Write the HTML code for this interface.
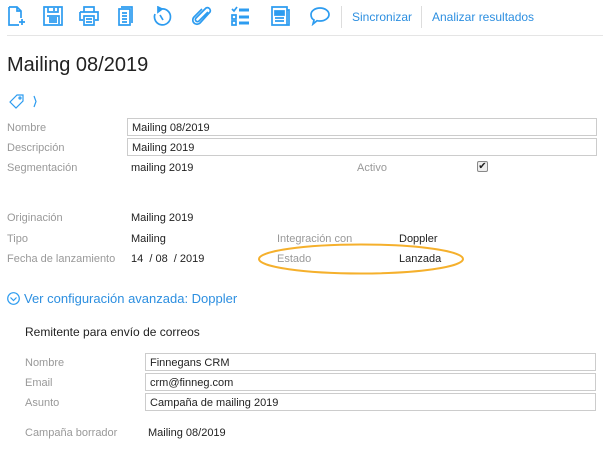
<!DOCTYPE html>
<html><head><meta charset="utf-8"><style>
body{margin:0;width:603px;height:456px;background:#fff;font-family:"Liberation Sans",sans-serif;position:relative;overflow:hidden}
.a{position:absolute;white-space:nowrap}
.l{font-size:11px;color:#999}
.v{font-size:11px;color:#222}
.in{position:absolute;border:1px solid #ccc;box-sizing:border-box;font-size:11px;color:#222;padding:3px 0 0 4px;height:18px}
svg.i{position:absolute;top:6px;width:20px;height:20px;fill:none;stroke:#2d9cf0;stroke-width:1.7}
</style></head><body>
<svg class="i" style="left:7px" viewBox="0 0 20 20"><path d="M2 1h8l4 4v7M2 1v18h10M10 1v4h4M15 13v6M12 16h6"/></svg>
<svg class="i" style="left:43px" viewBox="0 0 20 20"><path d="M1 1h18v18H1zM5 1v5h10V1M11 2v3M4 10h12v8M6 12h8M6 14h8M6 16h8"/></svg>
<svg class="i" style="left:79px" viewBox="0 0 20 20"><path d="M5 6V1h10v5M1 6h18v8h-3M4 14H1V6M5 10h10v9H5zM7 13h6M7 16h6"/></svg>
<svg class="i" style="left:115px" viewBox="0 0 20 20"><path d="M4 3h11v16H4zM6 1h11v16M7 7h5M7 10h5M7 13h5M7 16h5"/></svg>
<svg class="i" style="left:152px" viewBox="0 0 20 20"><path d="M9 3a8 8 0 1 1-6 5M8 9l3 5"/><path d="M6 1l4 2-4 3z" fill="#2d9cf0"/></svg>
<svg class="i" style="left:192px" viewBox="0 0 20 20"><path d="M16 6l-9 9a2 2 0 0 1-3-3l10-10a3 3 0 0 1 4 4L8 17a4 4 0 0 1-6-6l8-8"/></svg>
<svg class="i" style="left:231px" viewBox="0 0 20 20"><path d="M1 3l2 2 3-4M1 9h4v4H1zM1 15h4v4H1z"/><path d="M8 4h10M8 11h10M8 17h10" stroke-width="3"/></svg>
<svg class="i" style="left:271px" viewBox="0 0 20 20"><path d="M1 1h15v18H1zM16 4h2v15h-2"/><path d="M4 5h9v4H4z" fill="#2d9cf0"/><path d="M4 12h9M4 15h9"/></svg>
<svg class="i" style="left:310px" viewBox="0 0 20 20"><path d="M10 2c5 0 9 3 9 6.5S15 15 10 15c-1 0-2 0-3-.3L3 18l1-4C2 13 1 11 1 8.5 1 5 5 2 10 2z"/></svg>
<div class="a" style="left:341px;top:6px;width:1px;height:22px;background:#ddd"></div>
<div class="a" style="left:352px;top:10px;font-size:12px;color:#2d8fe0">Sincronizar</div>
<div class="a" style="left:421px;top:6px;width:1px;height:22px;background:#ddd"></div>
<div class="a" style="left:432px;top:10px;font-size:12px;color:#2d8fe0">Analizar resultados</div>
<div class="a" style="left:7px;top:35px;width:596px;height:1px;background:#e5e5e5"></div>
<div class="a" style="left:7px;top:54px;font-size:20px;color:#222">Mailing 08/2019</div>
<svg class="a" style="left:9px;top:94px" width="32" height="15" viewBox="0 0 32 15" fill="none" stroke="#2d9cf0" stroke-width="1.2"><path d="M1 8l7-7h6v6l-7 7z"/><circle cx="11" cy="4" r="1"/><path d="M25 2l2 5.5-2 5.5"/></svg>
<div class="a l" style="left:7px;top:122px">Nombre</div>
<div class="in" style="left:127px;top:118px;width:470px">Mailing 08/2019</div>
<div class="a l" style="left:7px;top:142px">Descripción</div>
<div class="in" style="left:127px;top:138px;width:470px">Mailing 2019</div>
<div class="a l" style="left:7px;top:162px">Segmentación</div>
<div class="a v" style="left:131px;top:162px">mailing 2019</div>
<div class="a l" style="left:357px;top:162px">Activo</div>
<div class="a" style="left:477px;top:161px;width:11px;height:11px;border:1px solid #888;border-radius:2px;box-sizing:border-box;background:#eee;font-size:10px;line-height:9px;text-align:center;color:#222">✔</div>
<div class="a l" style="left:7px;top:212px">Originación</div>
<div class="a v" style="left:131px;top:212px">Mailing 2019</div>
<div class="a l" style="left:7px;top:233px">Tipo</div>
<div class="a v" style="left:131px;top:233px">Mailing</div>
<div class="a l" style="left:7px;top:253px">Fecha de lanzamiento</div>
<div class="a v" style="left:131px;top:253px">14 &nbsp;/ 08 &nbsp;/ 2019</div>
<div class="a l" style="left:277px;top:233px">Integración con</div>
<div class="a v" style="left:399px;top:233px">Doppler</div>
<div class="a l" style="left:277px;top:253px">Estado</div>
<div class="a v" style="left:399px;top:253px">Lanzada</div>
<svg class="a" style="left:256px;top:242px" width="210" height="34"><ellipse cx="105" cy="17" rx="102" ry="14.5" fill="none" stroke="#f5b02c" stroke-width="2"/></svg>
<svg class="a" style="left:7px;top:292px" width="13" height="13" fill="none" stroke="#2d9cf0" stroke-width="1.2"><circle cx="6.5" cy="6.5" r="5.8"/><path d="M3.5 5.5l3 3 3-3"/></svg>
<div class="a" style="left:24px;top:291px;font-size:13px;color:#2d8fe0">Ver configuración avanzada: Doppler</div>
<div class="a" style="left:25px;top:325px;font-size:12px;color:#222">Remitente para envío de correos</div>
<div class="a l" style="left:25px;top:357px">Nombre</div>
<div class="in" style="left:145px;top:353px;width:451px">Finnegans CRM</div>
<div class="a l" style="left:25px;top:377px">Email</div>
<div class="in" style="left:145px;top:373px;width:451px">crm@finneg.com</div>
<div class="a l" style="left:25px;top:397px">Asunto</div>
<div class="in" style="left:145px;top:393px;width:451px">Campaña de mailing 2019</div>
<div class="a l" style="left:25px;top:427px">Campaña borrador</div>
<div class="a v" style="left:148px;top:427px">Mailing 08/2019</div>
</body></html>
